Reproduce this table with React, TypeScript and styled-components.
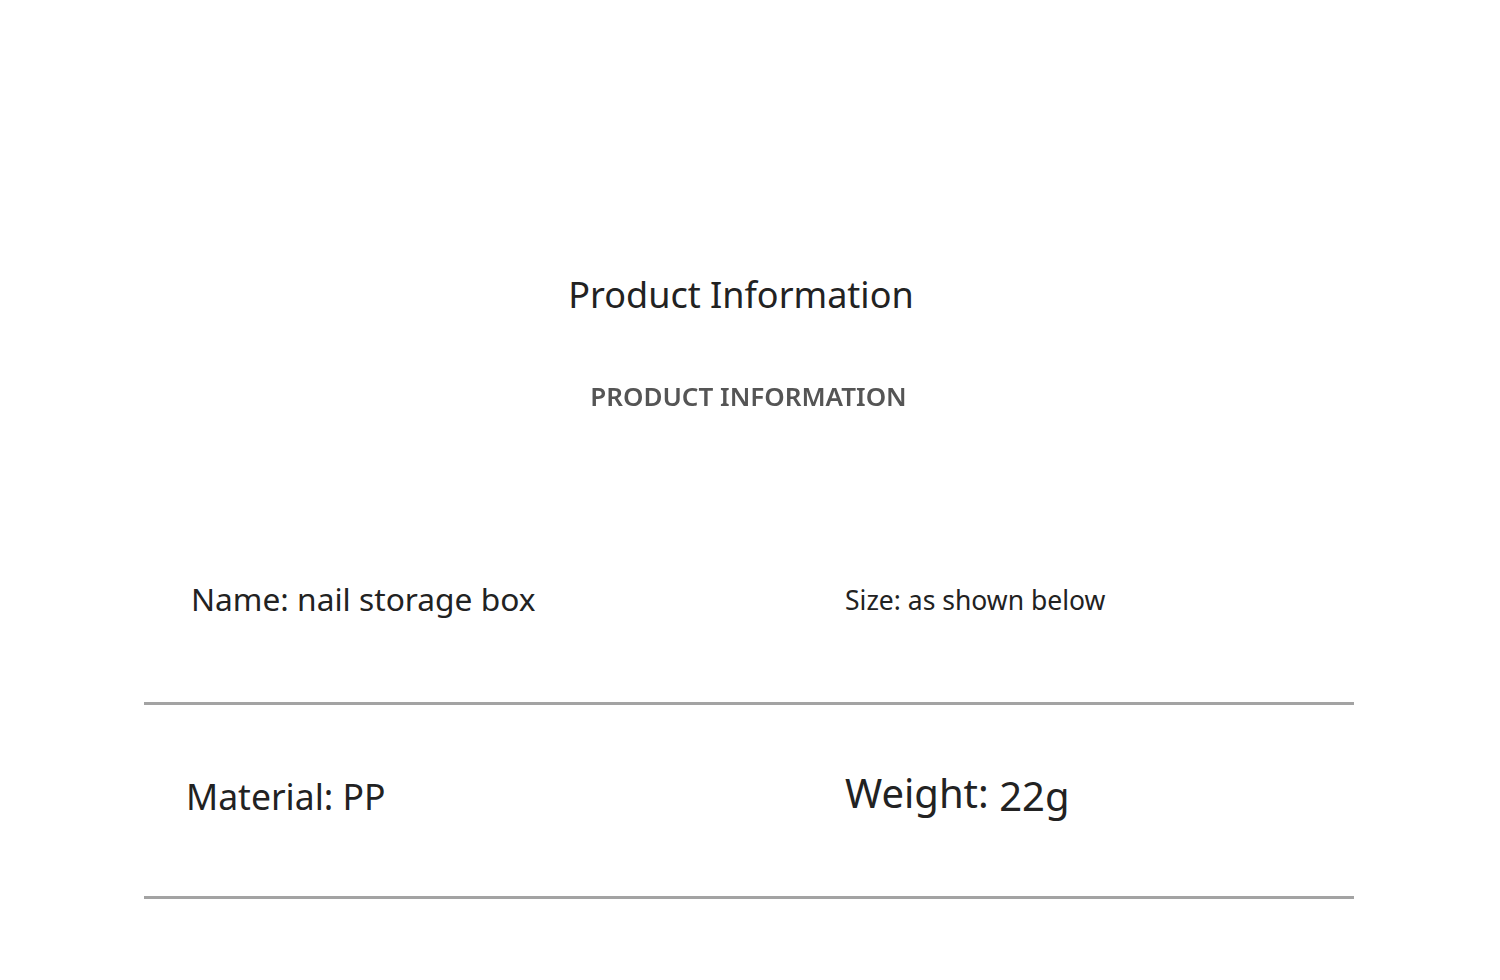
import * as React from "react";
import styled, { createGlobalStyle } from "styled-components";

const GlobalStyle = createGlobalStyle`
    html, body {
        margin: 0;
        padding: 0;
        background: #ffffff;
    }
    body {
        font-family: "Noto Sans", "Open Sans", sans-serif;
        color: #222222;
    }
`;

const Page = styled.div`
    width: 1500px;
    height: 980px;
    overflow: hidden;
    box-sizing: border-box;
    padding-top: 272px;
`;

const Heading = styled.header`
    display: flex;
    flex-direction: column;
    align-items: center;
`;

const Title = styled.h1`
    margin: 0 0 0 -18px;
    font-size: 36px;
    font-weight: 400;
    line-height: 46px;
    color: #222222;
`;

const Subtitle = styled.h2`
    margin: 61px 0 0 -3px;
    font-size: 26px;
    font-weight: 600;
    line-height: 34px;
    color: #555555;
    filter: blur(0.5px);
`;

const Table = styled.div`
    width: 1210px;
    margin: 99px 0 0 144px;
`;

const Row = styled.div<{ height: number }>`
    display: grid;
    grid-template-columns: 701px 1fr;
    align-items: center;
    height: ${({ height }) => height}px;
    border-bottom: 3px solid #a3a3a3;
`;

const Cell = styled.div<{ size: number; inset?: number; shift?: number }>`
    padding-left: ${({ inset }) => inset ?? 0}px;
    font-size: ${({ size }) => size}px;
    transform: translateY(${({ shift }) => shift ?? 0}px);
    color: #222222;
    white-space: nowrap;
`;

const Lowered = styled.span`
    display: inline-block;
    transform: translateY(3px);
`;

export default function App() {
    return (
        <Page>
            <GlobalStyle />
            <Heading>
                <Title>Product Information</Title>
                <Subtitle>PRODUCT INFORMATION</Subtitle>
            </Heading>
            <Table>
                <Row height={190}>
                    <Cell size={31.7} inset={47} shift={-9}>
                        Name: nail storage box
                    </Cell>
                    <Cell size={26.5} shift={-7}>
                        Size: as shown below
                    </Cell>
                </Row>
                <Row height={191}>
                    <Cell size={35.5} inset={42} shift={-5}>
                        Material: PP
                    </Cell>
                    <Cell size={40} shift={-8}>
                        Weight: <Lowered>22g</Lowered>
                    </Cell>
                </Row>
            </Table>
        </Page>
    );
}
